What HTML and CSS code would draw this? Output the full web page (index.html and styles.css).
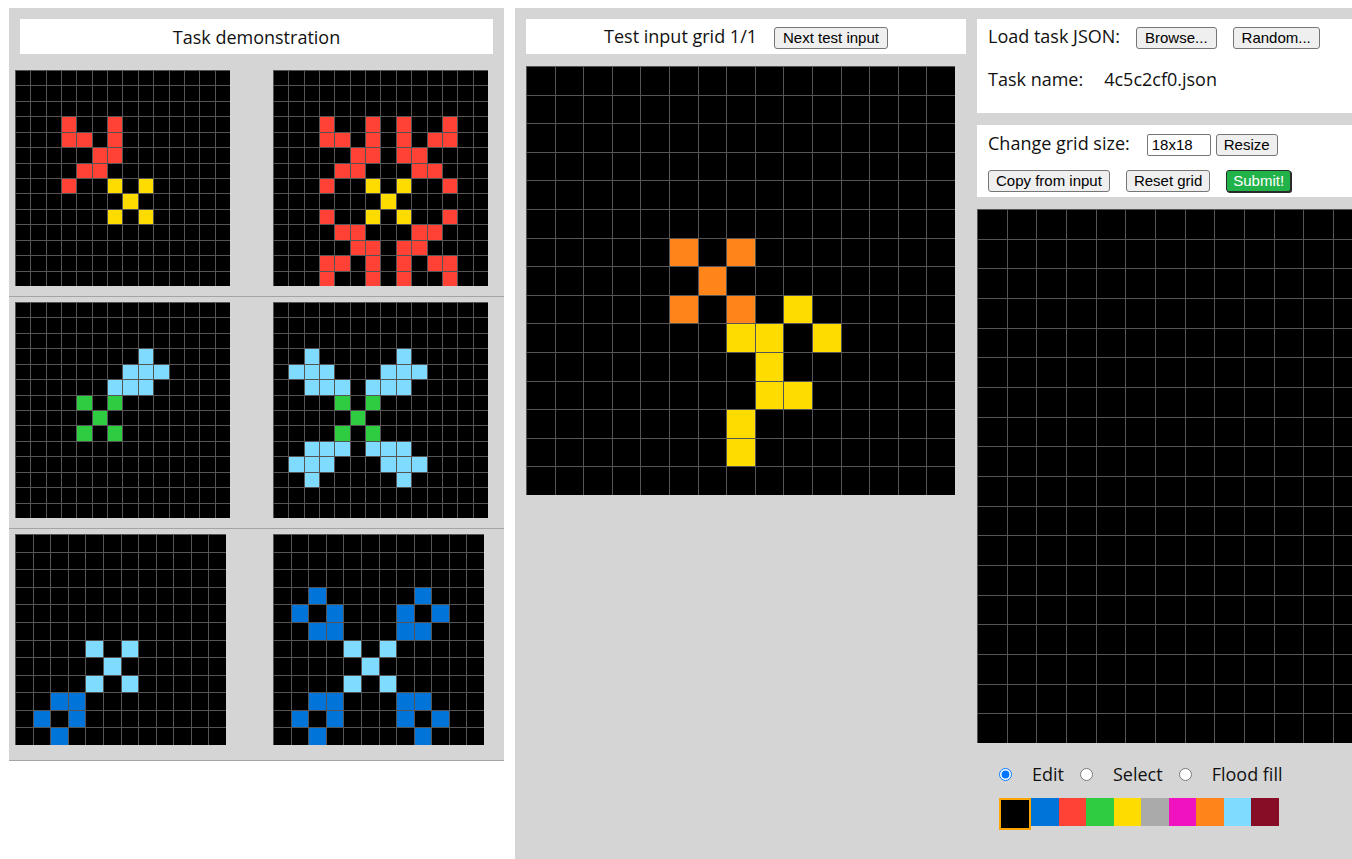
FILE: index.html
```html
<!DOCTYPE html>
<html lang="en">
<head>
<meta charset="utf-8">
<title>ARC testing interface</title>
<link rel="stylesheet" href="styles.css">
</head>
<body>
<div class="workspace">
  <section class="demo-panel">
    <div class="panel-header">Task demonstration</div>

    <div class="pair">
      <div class="grid grid-14" data-grid="
        00000000000000 00000000000000 00000000000000
        00020020000000 00022020000000 00000220000000 00002200000000
        00020040400000 00000004000000 00000040400000
        00000000000000 00000000000000 00000000000000 00000000000000"></div>
      <div class="grid grid-14" data-grid="
        00000000000000 00000000000000 00000000000000
        00020020200200 00022020202200 00000220220000 00002200022000
        00020040400200 00000004000000 00020040400200
        00002200022000 00000220220000 00022020202200 00020020200200"></div>
    </div>

    <div class="pair">
      <div class="grid grid-14" data-grid="
        00000000000000 00000000000000 00000000000000
        00000000800000 00000008880000 00000088800000
        00003030000000 00000300000000 00003030000000
        00000000000000 00000000000000 00000000000000 00000000000000 00000000000000"></div>
      <div class="grid grid-14" data-grid="
        00000000000000 00000000000000 00000000000000
        00800000800000 08880008880000 00888088800000
        00003030000000 00000300000000 00003030000000
        00888088800000 08880008880000 00800000800000
        00000000000000 00000000000000"></div>
    </div>

    <div class="pair">
      <div class="grid grid-12" data-grid="
        000000000000 000000000000 000000000000 000000000000 000000000000 000000000000
        000080800000 000008000000 000080800000
        001100000000 010100000000 001000000000"></div>
      <div class="grid grid-12" data-grid="
        000000000000 000000000000 000000000000
        001000001000 010100010100 001100011000
        000080800000 000008000000 000080800000
        001100011000 010100010100 001000001000"></div>
    </div>
  </section>

  <section class="eval-panel">
    <div class="test-col">
      <div class="panel-header test-header">
        <span>Test input grid 1/1</span>
        <button class="btn" type="button">Next test input</button>
      </div>
      <div class="grid grid-test" data-grid="
        000000000000000 000000000000000 000000000000000 000000000000000 000000000000000 000000000000000
        000007070000000 000000700000000 000007070400000 000000044040000
        000000004000000 000000004400000 000000040000000 000000040000000
        000000000000000"></div>
    </div>

    <div class="out-col">
      <div class="box box-load">
        <div class="row">
          <span class="label">Load task JSON:</span>
          <button class="btn" type="button">Browse...</button>
          <button class="btn" type="button">Random...</button>
        </div>
        <div class="row row-name">
          <span class="label">Task name:</span>
          <span class="label task-name">4c5c2cf0.json</span>
        </div>
      </div>

      <div class="box box-edit">
        <div class="row">
          <span class="label">Change grid size:</span>
          <input class="size-input" type="text" value="18x18">
          <button class="btn btn-resize" type="button">Resize</button>
        </div>
        <div class="row row-actions">
          <button class="btn" type="button">Copy from input</button>
          <button class="btn" type="button">Reset grid</button>
          <button class="btn btn-submit" type="button">Submit!</button>
        </div>
      </div>

      <div class="grid grid-out" data-empty="18"></div>

      <div class="tools">
        <div class="tool-row">
          <input class="radio" type="radio" name="tool" id="t-edit" checked>
          <label class="label tool-label" for="t-edit">Edit</label>
          <input class="radio" type="radio" name="tool" id="t-select">
          <label class="label tool-label" for="t-select">Select</label>
          <input class="radio" type="radio" name="tool" id="t-fill">
          <label class="label tool-label" for="t-fill">Flood fill</label>
        </div>
        <div class="palette">
          <div class="swatch c0 selected"></div>
          <div class="swatch c1"></div>
          <div class="swatch c2"></div>
          <div class="swatch c3"></div>
          <div class="swatch c4"></div>
          <div class="swatch c5"></div>
          <div class="swatch c6"></div>
          <div class="swatch c7"></div>
          <div class="swatch c8"></div>
          <div class="swatch c9"></div>
        </div>
      </div>
    </div>
  </section>
</div>
<script src="script.js"></script>
</body>
</html>
```

FILE: styles.css
```css
html, body {
  margin: 0;
  padding: 0;
  overflow: hidden;
  background: #ffffff;
}

body {
  font-family: "Open Sans", "DejaVu Sans", sans-serif;
  color: #111;
}

.workspace {
  display: flex;
  align-items: flex-start;
  gap: 11px;
  padding: 8px 0 0 9px;
}

/* ---------- left: demonstration ---------- */
.demo-panel {
  flex: 0 0 495px;
  width: 495px;
  background: #d5d5d5;
  padding-top: 11px;
  box-sizing: border-box;
}

.panel-header {
  height: 35px;
  background: #ffffff;
  display: flex;
  align-items: center;
  justify-content: center;
  font-size: 18px;
  box-sizing: border-box;
}

.demo-panel .panel-header {
  margin: 0 11px 11px;
}

.pair {
  display: grid;
  grid-template-columns: 258px auto;
  align-items: start;
  height: 216px;
  padding: 5px 0 10px 6px;
  border-bottom: 1px solid #a4a4a4;
}

/* ---------- grids ---------- */
.grid {
  display: grid;
  gap: 1px;
  padding: 1px 0 0 1px;
  background: #555555;
  box-sizing: border-box;
}

.grid-14 { width: 215px; height: 216px; }
.grid-12 { width: 211px; height: 211px; }
.grid-test { width: 429px; height: 429px; }
.grid-out { width: 534px; height: 534px; flex: 0 0 auto; }

.c0 { background: #000000; }
.c1 { background: #0074d9; }
.c2 { background: #ff4136; }
.c3 { background: #2ecc40; }
.c4 { background: #ffdc00; }
.c5 { background: #aaaaaa; }
.c6 { background: #f012be; }
.c7 { background: #ff851b; }
.c8 { background: #7fdbff; }
.c9 { background: #870c25; }

/* ---------- right: evaluation ---------- */
.eval-panel {
  flex: 0 0 auto;
  display: flex;
  align-items: flex-start;
  gap: 11px;
  background: #d5d5d5;
  padding: 11px 11px 0 11px;
  min-height: 860px;
  box-sizing: border-box;
}

.test-col {
  width: 440px;
  display: flex;
  flex-direction: column;
  gap: 12px;
}

.test-header {
  align-items: baseline;
  padding-top: 5px;
  gap: 17px;
}

.out-col {
  width: 534px;
  display: flex;
  flex-direction: column;
}

.box {
  background: #ffffff;
  padding: 0 11px;
}

.box-load {
  height: 94px;
  padding-top: 5px;
  box-sizing: border-box;
}

.box-edit {
  margin-top: 12px;
  height: 72px;
  padding-top: 6px;
  box-sizing: border-box;
}

.row {
  display: flex;
  align-items: baseline;
  gap: 16px;
}

.row-name {
  margin-top: 18px;
  gap: 21px;
}

.row-actions {
  margin-top: 14px;
}

.row-actions .btn {
  padding: 1px 7px;
}

.label {
  font-size: 18px;
}

.btn {
  font-family: "Liberation Sans", Arial, sans-serif;
  font-size: 15px;
  line-height: 18px;
  color: #000;
  background: #efefef;
  border: 1px solid #767676;
  border-radius: 3px;
  padding: 1px 8px;
  margin: 0;
}

.btn-resize {
  margin-left: -11px;
  padding: 1px 7px;
}

.row-actions .btn-submit {
  background: #22b24a;
  color: #ffffff;
  border-color: #2a2a2a;
  box-shadow: 1px 1px 0 #2a2a2a;
  padding: 1px 6px;
}

.size-input {
  font-family: "Liberation Sans", Arial, sans-serif;
  font-size: 15px;
  line-height: 18px;
  width: 64px;
  height: 22px;
  box-sizing: border-box;
  border: 1px solid #767676;
  border-radius: 2px;
  padding: 1px 4px;
  margin: 0 0 0 1px;
}

.grid-out {
  margin-top: 12px;
}

.tools {
  padding: 19px 0 0 22px;
}

.tool-row {
  display: flex;
  align-items: center;
}

.radio {
  margin: 0;
  width: 13px;
  height: 13px;
}

.tool-label {
  margin: 0 16px 0 20px;
}

.palette {
  display: flex;
  align-items: flex-start;
  margin-top: 12px;
}

.swatch {
  width: 27.5px;
  height: 28px;
}

.swatch.selected {
  border: 2px solid #ffa500;
  height: 28px;
  width: 28px;
}
```

FILE: script.js
```js
(function () {
  var grids = document.querySelectorAll('.grid');
  grids.forEach(function (g) {
    var rows;
    if (g.dataset.empty) {
      var n = parseInt(g.dataset.empty, 10);
      rows = [];
      for (var k = 0; k < n; k++) rows.push(new Array(n + 1).join('0'));
    } else {
      rows = g.dataset.grid.trim().split(/\s+/);
    }
    var cols = rows[0].length;
    g.style.gridTemplateColumns = 'repeat(' + cols + ', 1fr)';
    g.style.gridTemplateRows = 'repeat(' + rows.length + ', 1fr)';
    rows.forEach(function (r) {
      for (var i = 0; i < r.length; i++) {
        var c = document.createElement('div');
        c.className = 'cell c' + r[i];
        g.appendChild(c);
      }
    });
  });
})();
```
